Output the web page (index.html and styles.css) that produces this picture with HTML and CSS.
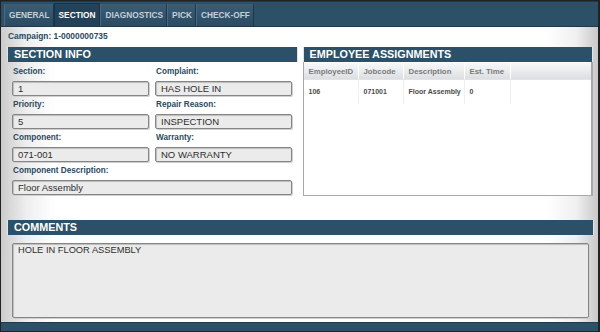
FILE: index.html
```html
<!DOCTYPE html>
<html>
<head>
<meta charset="utf-8">
<link rel="stylesheet" href="styles.css">
</head>
<body>
<div class="frame">
  <div class="tabbar">
    <div class="tab">GENERAL</div>
    <div class="tab active">SECTION</div>
    <div class="tab">DIAGNOSTICS</div>
    <div class="tab">PICK</div>
    <div class="tab">CHECK-OFF</div>
  </div>
  <div class="content">
    <div class="campaign">Campaign: 1-0000000735</div>
    <div class="panels">
      <div class="panel left">
        <div class="phead">SECTION INFO</div>
        <div class="form">
          <div class="field"><div class="label">Section:</div><div class="input">1</div></div>
          <div class="field"><div class="label">Complaint:</div><div class="input">HAS HOLE IN</div></div>
          <div class="field"><div class="label">Priority:</div><div class="input">5</div></div>
          <div class="field"><div class="label">Repair Reason:</div><div class="input">INSPECTION</div></div>
          <div class="field"><div class="label">Component:</div><div class="input">071-001</div></div>
          <div class="field"><div class="label">Warranty:</div><div class="input">NO WARRANTY</div></div>
          <div class="field wide"><div class="label">Component Description:</div><div class="input">Floor Assembly</div></div>
        </div>
      </div>
      <div class="panel right">
        <div class="phead">EMPLOYEE ASSIGNMENTS</div>
        <div class="grid">
          <div class="grow ghead">
            <div class="c c1">EmployeeID</div>
            <div class="c c2">Jobcode</div>
            <div class="c c3">Description</div>
            <div class="c c4">Est. Time</div>
            <div class="c c5"></div>
          </div>
          <div class="grow gdata">
            <div class="c c1">106</div>
            <div class="c c2">071001</div>
            <div class="c c3">Floor Assembly</div>
            <div class="c c4">0</div>
            <div class="c c5"></div>
          </div>
        </div>
      </div>
    </div>
    <div class="comments">
      <div class="phead">COMMENTS</div>
      <div class="textarea">HOLE IN FLOOR ASSEMBLY</div>
    </div>
  </div>
  <div class="bottombar"></div>
</div>
</body>
</html>
```
FILE: styles.css
```css
* { box-sizing: border-box; }
html, body { margin: 0; padding: 0; }
body {
  width: 600px;
  height: 332px;
  font-family: "Liberation Sans", Arial, sans-serif;
  background: #fff;
}
.frame {
  width: 600px;
  height: 332px;
  border: 1px solid #222;
  border-right-width: 2px;
  display: flex;
  flex-direction: column;
  background: linear-gradient(to right, #cbcbcb 0px, #eeeeee 25px, #fff 55px, #fff 545px, #f0f0f0 575px, #c8c8c8 597px);
}
.tabbar {
  height: 26px;
  background: #2d5069;
  border-top: 1px solid #333;
  border-bottom: 1px solid #203a4d;
  display: flex;
  align-items: flex-end;
  padding-left: 3px;
}
.tab {
  height: 22px;
  padding: 0 3px 0 4px;
  display: flex;
  align-items: center;
  font-size: 8.3px;
  font-weight: bold;
  color: #c5d0d8;
  background: linear-gradient(#3a5d76, #2a4b62);
  border-left: 1px solid #44698a;
  border-right: 1px solid #1d384b;
}
.tab.active {
  background: #234158;
  color: #fff;
  border-left: 1px solid #1a3244;
  border-right: 1px solid #1a3244;
  border-top: 1px solid #1a3244;
  height: 23px;
  padding: 0 4px;
}
.content {
  flex: 1;
  padding: 0 5px 0 6px;
  display: flex;
  flex-direction: column;
}
.campaign {
  font-size: 8.4px;
  font-weight: bold;
  color: #2b4a61;
  height: 20px;
  padding-top: 4px;
  padding-left: 1px;
}
.panels {
  display: flex;
  gap: 5px;
  height: 149px;
}
.panel { display: flex; flex-direction: column; }
.panel.left { width: 291px; }
.panel.right { width: 291px; }
.phead {
  height: 15px;
  background: #2d5069;
  color: #fff;
  font-size: 10.8px;
  font-weight: bold;
  line-height: 15px;
  padding-left: 6px;
  border: 1px solid #dde3e8;
  border-width: 0 1px;
}
.form {
  display: grid;
  grid-template-columns: 137px 137px;
  column-gap: 6px;
  padding: 1px 0 0 5px;
}
.field { display: flex; flex-direction: column; }
.field.wide { grid-column: 1 / span 2; }
.label {
  font-size: 8.2px;
  font-weight: bold;
  color: #2b4a61;
  height: 18px;
  line-height: 18px;
  padding-left: 1px;
}
.input {
  height: 15px;
  background: #ebebeb;
  border: 1px solid #858585;
  border-radius: 2px;
  box-shadow: inset 1px 1px 1px #bdbdbd, 1px 1px 0 #cfcfcf;
  font-size: 9.5px;
  color: #2e2e2e;
  line-height: 14px;
  padding-left: 5px;
}
.grid {
  flex: 1;
  border: 1px solid #a8a8a8;
  border-top: 0;
  border-right-width: 2px;
  background: #fff;
}
.grow { display: flex; }
.ghead {
  height: 17px;
  margin-top: 1px;
  background: linear-gradient(#f7f8f9, #dcdfe2);
  border-bottom: 1px solid #e4e4e4;
}
.ghead .c {
  font-size: 7.8px;
  font-weight: bold;
  color: #7a7a7a;
  line-height: 17px;
  border-right: 1px solid #fff;
}
.gdata { height: 24px; }
.gdata .c {
  font-size: 7px;
  font-weight: bold;
  color: #4a4a4a;
  line-height: 24px;
  border-right: 1px solid #f0f0f0;
}
.c { padding-left: 5px; white-space: nowrap; overflow: hidden; }
.c1 { width: 55px; }
.c2 { width: 45px; }
.c3 { width: 61px; }
.c4 { width: 46px; }
.c5 { flex: 1; border-right: 0 !important; }
.comments {
  margin-top: 24px;
  display: flex;
  flex-direction: column;
  width: 587px;
}
.textarea {
  margin: 8px 0 0 5px;
  width: 577px;
  height: 75px;
  background: #ebebeb;
  border: 1px solid #858585;
  border-radius: 2px;
  box-shadow: inset 1px 1px 1px #bdbdbd, 1px 1px 0 #cfcfcf;
  font-size: 9.3px;
  color: #2e2e2e;
  padding: 1px 0 0 5px;
}
.bottombar {
  margin-top: auto;
  height: 9px;
  background: #2d5069;
  border-top: 1px solid #1f3b4f;
}
```
